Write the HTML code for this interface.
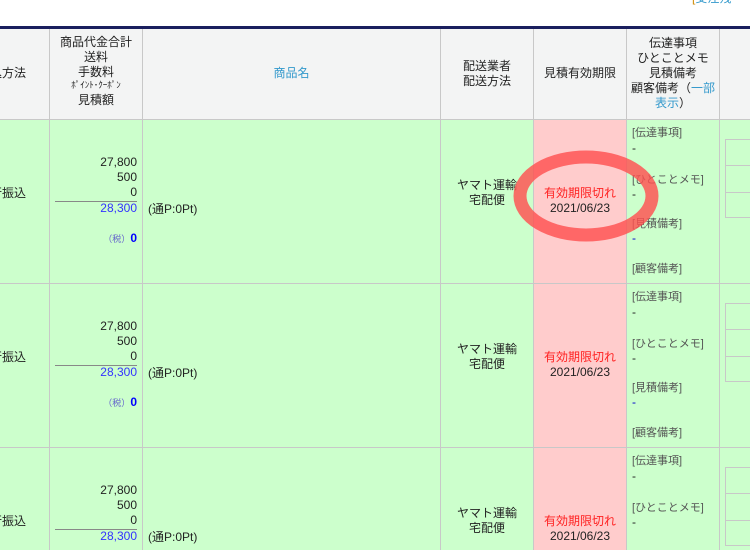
<!DOCTYPE html>
<html><head><meta charset="utf-8"><style>
*{margin:0;padding:0;box-sizing:border-box}
body{width:750px;height:550px;overflow:hidden;background:#fff;position:relative;font-family:"Liberation Sans","Noto Sans CJK JP",sans-serif;font-size:12px;color:#222}
.a{position:absolute;white-space:nowrap;line-height:15px}
.c{text-align:center}
.r{text-align:right}
.v{position:absolute;top:29px;height:521px;width:1px;background:#c8c8c8}
.h{position:absolute;left:0;width:750px;height:1px;background:#c8c8c8}
.lbl{color:#555;font-size:11px}
</style></head><body>
<div class="a" style="left:692px;top:-9px;color:#39c;font-size:12px"><span style="color:#c80">[</span>受注残</div>
<div style="position:absolute;left:0;top:26px;width:750px;height:3px;background:#1a1f5e"></div>
<div style="position:absolute;left:0;top:29px;width:750px;height:90px;background:#f3f4f4"></div>
<div style="position:absolute;left:0;top:120px;width:750px;height:430px;background:#ccffcc"></div>
<div style="position:absolute;left:534px;top:120px;width:92px;height:430px;background:#ffcccc"></div>
<div class="h" style="top:119px"></div>
<div class="h" style="top:283px"></div>
<div class="h" style="top:447px"></div>
<div class="v" style="left:49px"></div><div class="v" style="left:142px"></div><div class="v" style="left:440px"></div><div class="v" style="left:533px"></div><div class="v" style="left:626px"></div><div class="v" style="left:719px"></div>

<div class="a r" style="left:-40px;width:66px;top:66px">込方法</div>
<div class="a c" style="left:50px;width:92px;top:35px">商品代金合計<br>送料<br>手数料</div>
<div class="a c" style="left:50px;width:92px;top:80px;font-size:9px;line-height:11px">ﾎﾟｲﾝﾄ･ｸｰﾎﾟﾝ</div>
<div class="a c" style="left:50px;width:92px;top:93px">見積額</div>
<div class="a c" style="left:143px;width:297px;top:66px;color:#3399cc">商品名</div>
<div class="a c" style="left:441px;width:92px;top:59px">配送業者<br>配送方法</div>
<div class="a c" style="left:534px;width:92px;top:66px">見積有効期限</div>
<div class="a c" style="left:627px;width:92px;top:36px">伝達事項<br>ひとことメモ<br>見積備考<br>顧客備考（<span style="color:#3399cc">一部</span><br><span style="color:#3399cc">表示</span>）</div>

<div style="position:absolute;left:0;top:0;width:750px">
<div class="a r" style="left:-40px;width:66px;top:186px">行振込</div>
<div class="a r" style="left:50px;width:87px;top:155px">27,800<br>500<br>0</div>
<div style="position:absolute;left:55px;top:201px;width:82px;height:1px;background:#888"></div>
<div class="a r" style="left:50px;width:87px;top:201px;color:#3333ff">28,300</div>
<div class="a r" style="left:50px;width:87px;top:231px;color:#0000ff;font-weight:bold"><span style="font-size:9px;font-weight:normal;color:#66c">（税）</span>0</div>
<div class="a" style="left:148px;top:202px">(通P:0Pt)</div>
<div class="a c" style="left:441px;width:92px;top:178px">ヤマト運輸<br>宅配便</div>
<div class="a c" style="left:534px;width:92px;top:186px;color:#ff2222">有効期限切れ</div>
<div class="a c" style="left:534px;width:92px;top:201px">2021/06/23</div>
<div class="a lbl" style="left:632px;top:126px">[伝達事項]</div><div class="a" style="left:632px;top:141px">-</div>
<div class="a lbl" style="left:632px;top:173px">[ひとことメモ]</div><div class="a" style="left:632px;top:187px">-</div>
<div class="a lbl" style="left:632px;top:217px">[見積備考]</div><div class="a" style="left:632px;top:231px;color:#00c">-</div>
<div class="a lbl" style="left:632px;top:262px">[顧客備考]</div>
<div style="position:absolute;left:725px;top:139px;width:30px;height:79px;border:1px solid #c8c8c8"></div>
<div style="position:absolute;left:725px;top:165px;width:30px;height:1px;background:#c8c8c8"></div>
<div style="position:absolute;left:725px;top:192px;width:30px;height:1px;background:#c8c8c8"></div>
</div>

<div style="position:absolute;left:0;top:164px;width:750px">
<div class="a r" style="left:-40px;width:66px;top:186px">行振込</div>
<div class="a r" style="left:50px;width:87px;top:155px">27,800<br>500<br>0</div>
<div style="position:absolute;left:55px;top:201px;width:82px;height:1px;background:#888"></div>
<div class="a r" style="left:50px;width:87px;top:201px;color:#3333ff">28,300</div>
<div class="a r" style="left:50px;width:87px;top:231px;color:#0000ff;font-weight:bold"><span style="font-size:9px;font-weight:normal;color:#66c">（税）</span>0</div>
<div class="a" style="left:148px;top:202px">(通P:0Pt)</div>
<div class="a c" style="left:441px;width:92px;top:178px">ヤマト運輸<br>宅配便</div>
<div class="a c" style="left:534px;width:92px;top:186px;color:#ff2222">有効期限切れ</div>
<div class="a c" style="left:534px;width:92px;top:201px">2021/06/23</div>
<div class="a lbl" style="left:632px;top:126px">[伝達事項]</div><div class="a" style="left:632px;top:141px">-</div>
<div class="a lbl" style="left:632px;top:173px">[ひとことメモ]</div><div class="a" style="left:632px;top:187px">-</div>
<div class="a lbl" style="left:632px;top:217px">[見積備考]</div><div class="a" style="left:632px;top:231px;color:#00c">-</div>
<div class="a lbl" style="left:632px;top:262px">[顧客備考]</div>
<div style="position:absolute;left:725px;top:139px;width:30px;height:79px;border:1px solid #c8c8c8"></div>
<div style="position:absolute;left:725px;top:165px;width:30px;height:1px;background:#c8c8c8"></div>
<div style="position:absolute;left:725px;top:192px;width:30px;height:1px;background:#c8c8c8"></div>
</div>

<div style="position:absolute;left:0;top:328px;width:750px">
<div class="a r" style="left:-40px;width:66px;top:186px">行振込</div>
<div class="a r" style="left:50px;width:87px;top:155px">27,800<br>500<br>0</div>
<div style="position:absolute;left:55px;top:201px;width:82px;height:1px;background:#888"></div>
<div class="a r" style="left:50px;width:87px;top:201px;color:#3333ff">28,300</div>
<div class="a" style="left:148px;top:202px">(通P:0Pt)</div>
<div class="a c" style="left:441px;width:92px;top:178px">ヤマト運輸<br>宅配便</div>
<div class="a c" style="left:534px;width:92px;top:186px;color:#ff2222">有効期限切れ</div>
<div class="a c" style="left:534px;width:92px;top:201px">2021/06/23</div>
<div class="a lbl" style="left:632px;top:126px">[伝達事項]</div><div class="a" style="left:632px;top:141px">-</div>
<div class="a lbl" style="left:632px;top:173px">[ひとことメモ]</div><div class="a" style="left:632px;top:187px">-</div>
<div style="position:absolute;left:725px;top:139px;width:30px;height:79px;border:1px solid #c8c8c8"></div>
<div style="position:absolute;left:725px;top:165px;width:30px;height:1px;background:#c8c8c8"></div>
<div style="position:absolute;left:725px;top:192px;width:30px;height:1px;background:#c8c8c8"></div>
</div>

<svg style="position:absolute;left:0;top:0" width="750" height="550">
<ellipse cx="586" cy="196" rx="66" ry="39" fill="none" stroke="rgba(255,80,80,0.82)" stroke-width="13"/>
</svg>
</body></html>
